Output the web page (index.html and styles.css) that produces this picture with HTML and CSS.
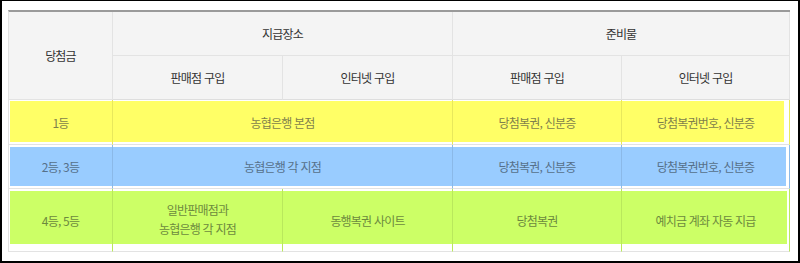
FILE: index.html
```html
<!DOCTYPE html>
<html lang="ko">
<head>
<meta charset="utf-8">
<title>당첨금 지급</title>
<link rel="stylesheet" href="styles.css">
</head>
<body>
<div class="frame">
  <table class="prize">
    <colgroup>
      <col class="c-rank">
      <col class="c-wide">
      <col class="c-wide">
      <col class="c-mid">
      <col class="c-last">
    </colgroup>
    <thead>
      <tr class="h1">
        <th rowspan="2">당첨금</th>
        <th colspan="2">지급장소</th>
        <th colspan="2">준비물</th>
      </tr>
      <tr class="h2">
        <th>판매점 구입</th>
        <th>인터넷 구입</th>
        <th>판매점 구입</th>
        <th>인터넷 구입</th>
      </tr>
    </thead>
    <tbody>
      <tr class="r-yellow">
        <td class="first">1등</td>
        <td colspan="2">농협은행 본점</td>
        <td>당첨복권, 신분증</td>
        <td class="last">당첨복권번호, 신분증</td>
      </tr>
      <tr class="r-blue">
        <td class="first">2등, 3등</td>
        <td colspan="2">농협은행 각 지점</td>
        <td>당첨복권, 신분증</td>
        <td class="last">당첨복권번호, 신분증</td>
      </tr>
      <tr class="r-green">
        <td class="first">4등, 5등</td>
        <td class="two">일반판매점과<br>농협은행 각 지점</td>
        <td>동행복권 사이트</td>
        <td>당첨복권</td>
        <td class="last">예치금 계좌 자동 지급</td>
      </tr>
    </tbody>
  </table>
</div>
</body>
</html>
```

FILE: styles.css
```css
html, body {
  margin: 0;
  padding: 0;
  background: #fff;
}

.frame {
  box-sizing: border-box;
  width: 800px;
  height: 263px;
  border: 2px solid #000;
  border-top-width: 1px;
  padding: 9px 0 0 6px;
  background: #fff;
  font-family: "Noto Sans CJK KR", "Noto Sans", sans-serif;
  font-size: 12px;
  letter-spacing: -0.8px;
}

.prize {
  width: 782px;
  table-layout: fixed;
  border-collapse: separate;
  border-spacing: 0;
  border-top: 2px solid #9a9a9a;
  border-left: 1px solid #e2e2e2;
}

.c-rank { width: 104px; }
.c-wide { width: 170px; }
.c-mid { width: 169px; }
.c-last { width: 168px; }

.prize th,
.prize td {
  box-sizing: border-box;
  padding: 0;
  text-align: center;
  vertical-align: middle;
  font-weight: normal;
  border-right: 1px solid rgba(0, 0, 0, 0.09);
  border-bottom: 1px solid #e3e3e3;
  white-space: nowrap;
}

.prize th {
  background: #f4f4f4;
  color: #333;
  border-right-color: #e3e3e3;
}

.h1 { height: 44px; }
.h2 { height: 44px; }
.prize thead .h2 th { border-bottom-color: #dedede; }

.r-yellow { height: 45px; }
.r-blue { height: 44px; }
.r-green { height: 63px; }

.r-yellow td {
  background: #ffff66;
  color: #7f7f4c;
  box-shadow: inset 0 1px 0 #fff, inset 0 -2px 0 #fff;
}

.r-blue td {
  background: #99ccff;
  color: #56708a;
  box-shadow: inset 0 2px 0 #fff, inset 0 -2px 0 #fff;
}

.r-green td {
  background: #ccff66;
  color: #6c8a3e;
  box-shadow: inset 0 2px 0 #fff, inset 0 -7px 0 #fff;
}

.r-yellow td.first { box-shadow: inset 0 1px 0 #fff, inset 0 -2px 0 #fff, inset 1px 0 0 #fff; }
.r-blue td.first { box-shadow: inset 0 2px 0 #fff, inset 0 -2px 0 #fff, inset 1px 0 0 #fff; }
.r-green td.first { box-shadow: inset 0 2px 0 #fff, inset 0 -7px 0 #fff, inset 1px 0 0 #fff; }

.r-yellow td.last { box-shadow: inset 0 1px 0 #fff, inset 0 -2px 0 #fff, inset -5px 0 0 #fff; }
.r-blue td.last { box-shadow: inset 0 2px 0 #fff, inset 0 -2px 0 #fff, inset -3px 0 0 #fff; }
.r-green td.last { box-shadow: inset 0 2px 0 #fff, inset 0 -7px 0 #fff, inset -2px 0 0 #fff; }

.prize td.two {
  line-height: 19px;
  padding-bottom: 3px;
}

.prize td.first,
.prize td.last,
.prize tbody td {
  border-bottom-color: #e3e3e3;
}
```
